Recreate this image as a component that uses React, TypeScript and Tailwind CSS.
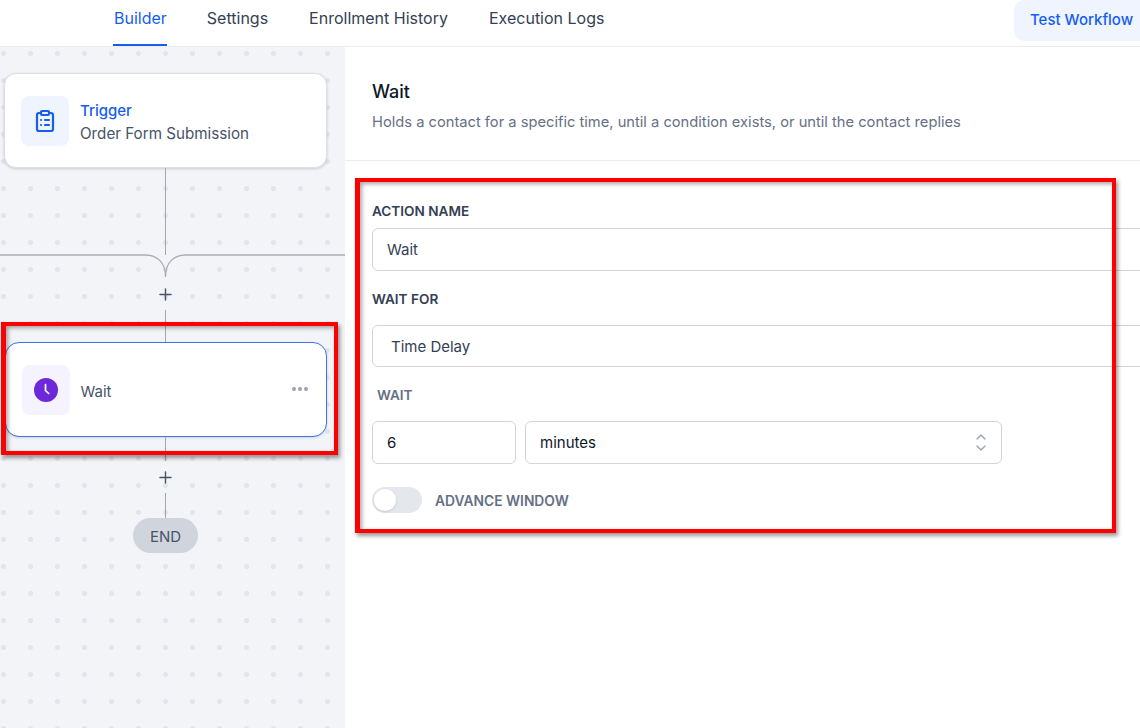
import { ChevronDown, ChevronUp, ClipboardList, Plus } from "lucide-react";

const tabs = ["Builder", "Settings", "Enrollment History", "Execution Logs"];

function Line({ height }: { height: number }) {
  return <div className="w-px bg-[#a3a7ad]" style={{ height }} />;
}

function AddStep() {
  return <Plus className="w-[19px] h-[19px] text-[#475467] my-[6.5px]" strokeWidth={1.8} />;
}

function WaitIcon() {
  return (
    <svg viewBox="0 0 24 24" className="w-6 h-6">
      <circle cx="12" cy="12" r="12" fill="#6d28d9" />
      <path d="M11.5 6.5v6l3.2 3" fill="none" stroke="#fff" strokeWidth="1.7" strokeLinecap="round" />
    </svg>
  );
}

export default function App() {
  return (
    <div className="relative w-[1140px] h-[728px] overflow-hidden bg-white font-['Inter',sans-serif] text-[#101828]">
      {/* Top tabs */}
      <div className="h-[47px] border-b border-[#eaecf0] flex items-start pl-[113px] pr-0">
        <div className="flex gap-[41px] text-base text-[#344054]">
          {tabs.map((tab, i) => (
            <div
              key={tab}
              className={`h-[46px] pt-[6px] ${i === 0 ? "text-[#155eef] border-b-2 border-[#155eef] pl-px -mr-px" : ""}`}
            >
              {tab}
            </div>
          ))}
        </div>
        <button className="ml-auto h-[41px] w-[126px] pl-[16px] text-left rounded-l-[10px] bg-[#eff4ff] text-[#155eef] text-[15px] font-medium">
          Test Workflow
        </button>
      </div>

      <div className="flex h-[681px]">
        {/* Canvas */}
        <div className="w-[345px] shrink-0 flex flex-col items-center bg-[#f2f4f8] bg-[radial-gradient(circle,#e3e5ea_2.4px,transparent_2.5px)] bg-[size:27px_27px] bg-[position:-10px_-7px] pt-[26px]">
          <div className="w-[323px] h-[95px] ml-[-14px] shrink-0 rounded-[12px] bg-white border border-[#dcdfe4] shadow-[0_1px_3px_rgba(16,24,40,0.18)] flex items-center pl-[16px] gap-[11px]">
            <div className="w-12 h-[50px] rounded-lg bg-[#eff4ff] flex items-center justify-center">
              <ClipboardList className="w-6 h-6 text-[#155eef]" strokeWidth={2.2} />
            </div>
            <div className="pt-[4px]">
              <div className="text-[15px] font-medium text-[#155eef] leading-[20px]">Trigger</div>
              <div className="text-[15.2px] text-[#475467] leading-[20px] mt-[3px]">Order Form Submission</div>
            </div>
          </div>
          <div className="ml-[-14px] flex flex-col items-center">
            <Line height={87} />
          </div>
          <svg viewBox="0 0 345 24" className="w-[345px] h-6 shrink-0 -mt-px" fill="none" stroke="#a9adb3" strokeWidth="1.3">
            <path d="M0 1H145C157 1 165.5 8 165.5 23C165.5 8 174 1 186 1H345" />
          </svg>
          <div className="ml-[-14px] flex flex-col items-center shrink-0">
            <AddStep />
            <Line height={32} />
            <div className="w-[322px] h-[95px] rounded-[14px] bg-white border border-[#3f74ea] shadow-sm flex items-center pl-[16px] gap-[11px]">
              <div className="w-12 h-[50px] rounded-lg bg-[#f5f3ff] flex items-center justify-center">
                <WaitIcon />
              </div>
              <span className="text-[15px] text-[#475467] pt-[6px]">Wait</span>
              <div className="ml-auto mr-[18px] flex gap-[2px] mb-[2px]">
                <span className="w-[4px] h-[4px] rounded-full bg-[#98a2b3]" />
                <span className="w-[4px] h-[4px] rounded-full bg-[#98a2b3]" />
                <span className="w-[4px] h-[4px] rounded-full bg-[#98a2b3]" />
              </div>
            </div>
            <Line height={24} />
            <AddStep />
            <Line height={25} />
            <div className="w-[65px] h-[35px] pt-[3px] rounded-full bg-[#d0d5dd] text-[15px] text-[#475467] flex items-center justify-center">
              END
            </div>
          </div>
        </div>

        {/* Config panel */}
        <div className="flex-1 min-w-0">
          <div className="h-[114px] border-b border-[#eaecf0] pl-[27px] pt-[32px]">
            <h2 className="text-lg font-medium leading-[26px] text-[#101828]">Wait</h2>
            <p className="text-[14.7px] text-[#667085] mt-[7px] leading-[20px]">
              Holds a contact for a specific time, until a condition exists, or until the contact replies
            </p>
          </div>
          <div className="pl-[27px] pt-[42px] w-[840px]">
            <label className="block text-[13.6px] font-semibold text-[#344054] leading-[16px]">ACTION NAME</label>
            <div className="mt-[9px] h-[43px] pt-[2px] rounded-md border border-[#d0d5dd] flex items-center pl-[14px] text-[15px] text-[#344054]">
              Wait
            </div>
            <label className="block mt-[20px] text-[13.6px] font-semibold text-[#344054] leading-[16px]">WAIT FOR</label>
            <div className="mt-[18px] h-[42px] pt-[2px] rounded-md border border-[#d0d5dd] flex items-center pl-[18px] text-[15px] text-[#344054]">
              Time Delay
            </div>
            <label className="block mt-[20px] ml-[5px] text-[13.6px] font-semibold text-[#667085] leading-[16px]">WAIT</label>
            <div className="mt-[18px] flex gap-[9px] h-[43px] text-[15px] text-[#101828]">
              <div className="w-[144px] pt-[2px] rounded-md border border-[#d0d5dd] flex items-center pl-[14px]">6</div>
              <div className="w-[477px] rounded-md border border-[#d0d5dd] flex items-center pl-[14px] pr-[12px] justify-between">
                <span className="pt-[2px]">minutes</span>
                <div className="flex flex-col text-[#98a2b3]">
                  <ChevronUp className="w-4 h-4 -mb-[5.5px]" strokeWidth={2} />
                  <ChevronDown className="w-4 h-4" strokeWidth={2} />
                </div>
              </div>
            </div>
            <div className="mt-[23px] flex items-center gap-[13px]">
              <div className="w-[50px] h-[26px] rounded-full bg-[#e4e7ec] p-[2px]">
                <div className="w-[22px] h-[22px] rounded-full bg-white shadow" />
              </div>
              <span className="text-[13.8px] font-semibold text-[#667085] pt-[2px]">ADVANCE WINDOW</span>
            </div>
          </div>
        </div>
      </div>

      {/* Red callouts drawn over the screenshot */}
      <div className="absolute left-[1px] top-[322px] w-[337px] h-[133px] border-[4px] border-l-[5px] border-[#ff0000] shadow-[2px_3px_4px_rgba(0,0,0,0.4),inset_2px_2px_4px_rgba(0,0,0,0.35)]" />
      <div className="absolute left-[355px] top-[178px] w-[761px] h-[355px] border-[4px] border-l-[5px] border-[#ff0000] shadow-[2px_3px_4px_rgba(0,0,0,0.4),inset_2px_2px_4px_rgba(0,0,0,0.35)]" />
    </div>
  );
}
